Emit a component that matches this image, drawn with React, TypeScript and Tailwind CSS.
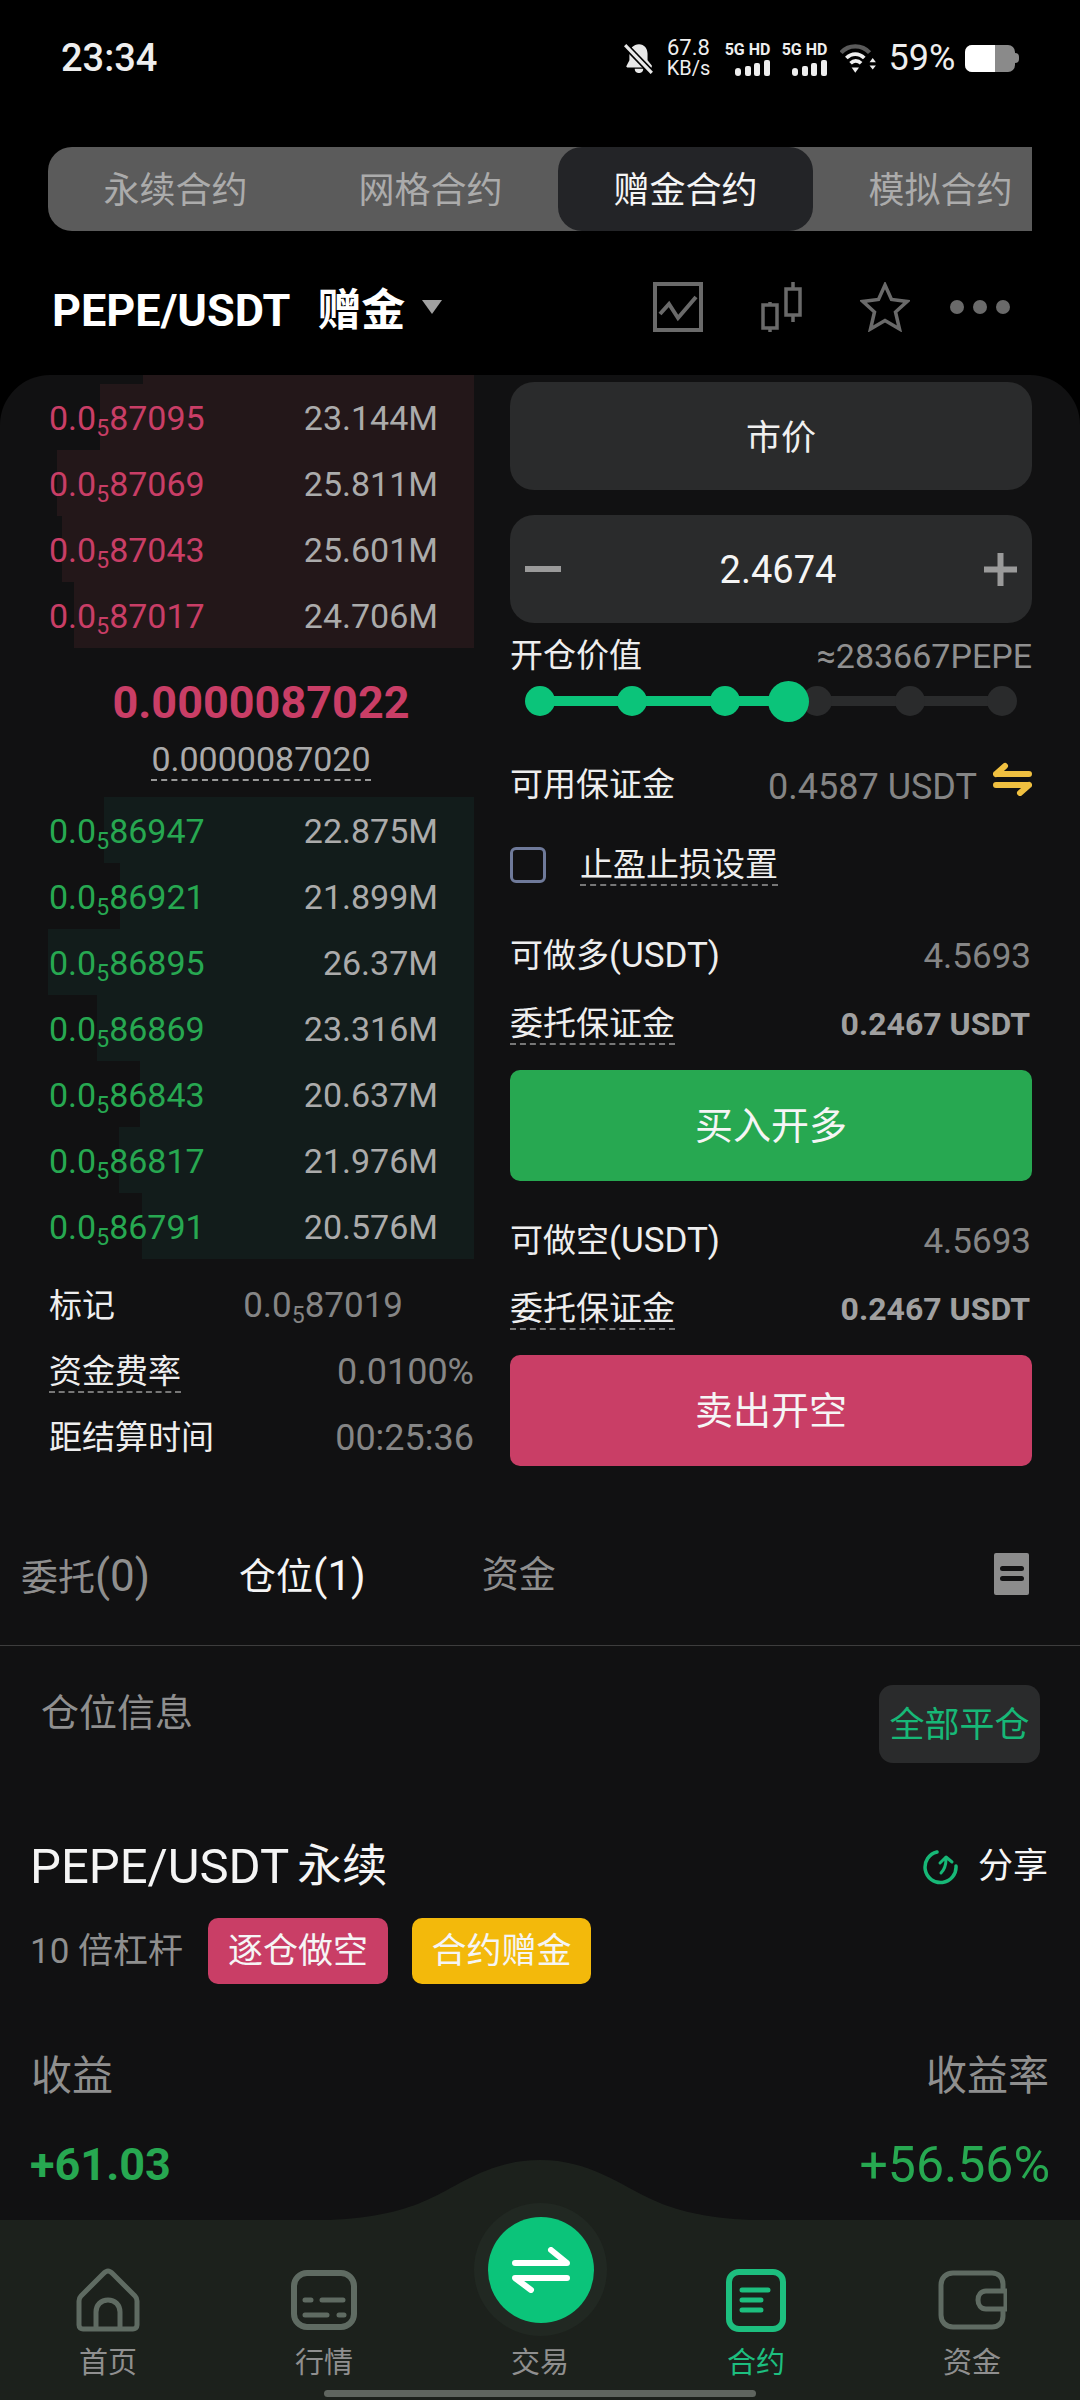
import type { ReactNode } from 'react';

const asks = [
  { price: '87095', qty: '23.144M', left: 100 },
  { price: '87069', qty: '25.811M', left: 57 },
  { price: '87043', qty: '25.601M', left: 62 },
  { price: '87017', qty: '24.706M', left: 74 },
];

const bids = [
  { price: '86947', qty: '22.875M', left: 104 },
  { price: '86921', qty: '21.899M', left: 120 },
  { price: '86895', qty: '26.37M', left: 48 },
  { price: '86869', qty: '23.316M', left: 97 },
  { price: '86843', qty: '20.637M', left: 140 },
  { price: '86817', qty: '21.976M', left: 119 },
  { price: '86791', qty: '20.576M', left: 142 },
];

function Sub5({ digits }: { digits: string }) {
  return (
    <span>
      0.0<span className="text-[23px] leading-[0] align-[-6px]">5</span>
      {digits}
    </span>
  );
}

/* ── Order book row ── */
function BookRow({ price, qty, left, side }: { price: string; qty: string; left: number; side: 'ask' | 'bid' }) {
  return (
    <div className="relative h-[66px] flex items-center justify-between pl-[49px] pr-[36px] pt-[2px] text-[34px] leading-none">
      <div
        className={`absolute top-0 bottom-0 right-0 ${side === 'ask' ? 'bg-[#231719]' : 'bg-[#121c1b]'}`}
        style={{ left }}
      />
      <span className={`relative ${side === 'ask' ? 'text-[#c93e66]' : 'text-[#27a851]'}`}>
        <Sub5 digits={price} />
      </span>
      <span className="relative text-[#ababab]">{qty}</span>
    </div>
  );
}

function Dashed({ children }: { children: ReactNode }) {
  return <span className="inline-block h-[42px] leading-[42px] border-b-2 border-dashed border-[#777]">{children}</span>;
}

function InfoRow({ children }: { children: ReactNode }) {
  return <div className="h-[66px] flex items-center justify-between pl-[49px] text-[33px] text-[#eeeeee]">{children}</div>;
}

function MarginRows({ title }: { title: string }) {
  return (
    <>
      <div className="h-[56px] flex items-center justify-between text-[33px] text-[#eeeeee]">
        <span>
          {title}
          <span className="text-[35px]">(USDT)</span>
        </span>
        <span className="text-[35px] text-[#858585] mr-[1px] pt-[2px]">4.5693</span>
      </div>
      <div className="mt-[12px] h-[56px] flex items-center justify-between text-[33px] text-[#eeeeee]">
        <Dashed>委托保证金</Dashed>
        <span className="text-[32px] font-bold text-[#a0a0a0] mr-[2px]">0.2467 USDT</span>
      </div>
    </>
  );
}

/* ── Status bar icons ── */
function Signal() {
  return (
    <div className="w-[47px] flex flex-col items-end">
      <span className="text-[16px] font-bold leading-[18px] text-[#eeeeee] whitespace-nowrap">5G HD</span>
      <svg width="35" height="16" viewBox="0 0 35 16" className="mt-[1px]">
        <rect x="0" y="8" width="6" height="8" rx="3" fill="#eee" />
        <rect x="10" y="6" width="6" height="10" rx="2" fill="#eee" />
        <rect x="19" y="3" width="6" height="13" rx="2" fill="#eee" />
        <rect x="29" y="0" width="6" height="16" rx="2" fill="#eee" />
      </svg>
    </div>
  );
}

function StatusBar() {
  return (
    <div className="h-[116px] flex items-center pl-[61px] text-[#eeeeee]">
      <span className="text-[38px] font-medium leading-none">23:34</span>
      <svg width="30" height="32" viewBox="0 0 28 30" className="ml-[467px]">
        <path d="M14 2c5 0 8 4 8 9v6l4 5v2H3l-1-1 3-6v-6c0-5 4-9 9-9zM10 25h8c0 3-2 4-4 4s-4-1-4-4z" fill="#e8e8e8" />
        <path d="M1 3l25 26" stroke="#000" strokeWidth="6" />
        <path d="M1 3l25 26" stroke="#e8e8e8" strokeWidth="3" />
      </svg>
      <div className="ml-[12px] w-[44px] flex flex-col items-center">
        <span className="h-[20px] leading-[20px] text-[22px]">67.8</span>
        <span className="h-[20px] leading-[20px] text-[20px]">KB/s</span>
      </div>
      <div className="ml-[13px]"><Signal /></div>
      <div className="ml-[10px]"><Signal /></div>
      <svg width="38" height="32" viewBox="0 0 36 30" className="ml-[13px]">
        <path d="M1 10C8 2 21 2 28 10" stroke="#5a5a5a" strokeWidth="4" fill="none" />
        <path d="M6 15c5-5 12-5 17 0" stroke="#eee" strokeWidth="3.500" fill="none" />
        <path d="M10 20c3-3 7-3 10 0" stroke="#eee" strokeWidth="3.500" fill="none" />
        <path d="M11 24h7l-3.500 5z" fill="#eee" />
        <path d="M28 19l3-4 3 4zM28 22l3 4 3-4z" fill="#eee" />
      </svg>
      <span className="ml-[10px] text-[36px] leading-none">59%</span>
      <div className="ml-[10px] w-[50px] h-[27px] rounded-[7px] overflow-hidden flex bg-[#8a8a8a]">
        <div className="w-[30px] bg-white" />
      </div>
      <div className="w-[4px] h-[10px] rounded-r-full bg-[#8a8a8a]" />
    </div>
  );
}

function TabItem({ label, active }: { label: string; active?: boolean }) {
  return (
    <div
      className={`w-[255px] shrink-0 h-full pt-[3px] flex items-center justify-center text-[36px] ${
        active ? 'bg-[#232427] rounded-[24px] text-[#f5f5f5]' : 'text-[#ababab]'
      }`}
    >
      {label}
    </div>
  );
}

/* ── Bottom nav icons ── */
function HomeIcon() {
  return (
    <svg width="64" height="64" viewBox="0 0 64 64" fill="none" stroke="#5f6b62" strokeWidth="5" strokeLinejoin="round" strokeLinecap="round">
      <path d="M32 3c2 0 3 1 5 3l22 22c2 2 2 3 2 5v24c0 3-2 4-4 4H7c-2 0-4-1-4-4V33c0-2 0-3 2-5L27 6c2-2 3-3 5-3z" />
      <path d="M20 60V44c0-7 5-12 12-12s12 5 12 12v16" />
    </svg>
  );
}

function MarketIcon() {
  return (
    <svg width="66" height="60" viewBox="0 0 66 60" fill="none" stroke="#5f6b62" strokeLinecap="round">
      <rect x="3" y="3" width="60" height="54" rx="13" strokeWidth="6" />
      <path d="M14 30h6M31 30h21M14 45h22M48 45h5" strokeWidth="5" />
    </svg>
  );
}

function ContractIcon() {
  return (
    <svg width="60" height="63" viewBox="0 0 60 63" fill="none" stroke="#1dbf7f" strokeLinecap="round">
      <rect x="3" y="3" width="54" height="57" rx="10" strokeWidth="6" />
      <path d="M16 21h26M16 31h19M16 41h19" strokeWidth="5" />
    </svg>
  );
}

function WalletIcon() {
  return (
    <svg width="69" height="60" viewBox="0 0 69 60" fill="none" stroke="#5f6b62" strokeWidth="5">
      <path d="M65 20V14C65 7 60 3 54 3H15C8 3 3 8 3 15v30c0 7 5 12 12 12h39c6 0 11-4 11-11v-6" />
      <path d="M68 21H48c-5 0-8 4-8 9s3 9 8 9h20z" />
    </svg>
  );
}

function NavItem({ label, icon, active }: { label: string; icon?: ReactNode; active?: boolean }) {
  return (
    <div className="flex flex-col items-center">
      <div className="h-[64px] flex items-center justify-center">{icon}</div>
      <span className={`mt-[9px] h-[45px] leading-[45px] text-[29px] ${active ? 'text-[#1dbf7f]' : 'text-[#8f8f8f]'}`}>{label}</span>
    </div>
  );
}

export default function App() {
  return (
    <div
      className="w-[1080px] h-[2400px] overflow-hidden bg-black flex flex-col"
      style={{ fontFamily: 'Roboto, "Noto Sans CJK SC", sans-serif' }}
    >
      <StatusBar />

      {/* 顶部合约切换 */}
      <div className="mt-[31px] ml-[48px] w-[984px] h-[84px] flex overflow-hidden rounded-l-[24px] bg-[#5b5b5b]">
        <TabItem label="永续合约" />
        <TabItem label="网格合约" />
        <TabItem label="赠金合约" active />
        <TabItem label="模拟合约" />
      </div>

      {/* 标题栏 */}
      <div className="mt-[41px] h-[72px] flex items-center pl-[52px]">
        <span className="pt-[5px] text-[45px] font-bold text-white leading-none">PEPE/USDT</span>
        <span className="ml-[27px] pt-[5px] text-[44px] font-bold text-white leading-none">赠金</span>
        <div className="ml-[17px] mt-[-2px] w-0 h-0 border-x-[10px] border-x-transparent border-t-[14px] border-t-[#a0a0a0]" />
        <svg width="50" height="50" viewBox="0 0 50 50" fill="none" stroke="#6a6a6a" strokeWidth="4" className="ml-[211px] mt-[-3px]">
          <rect x="2" y="2" width="46" height="46" />
          <path d="M7 32l9-10 9 14 18-21" />
        </svg>
        <svg width="41" height="50" viewBox="0 0 41 50" fill="none" stroke="#6a6a6a" strokeWidth="3.500" className="ml-[58px] mt-[-3px]">
          <rect x="2" y="23" width="14" height="23" />
          <path d="M9 20v3M9 46v4" />
          <rect x="25" y="7" width="14" height="26" />
          <path d="M32 0v7M32 33v7" />
        </svg>
        <svg width="50" height="50" viewBox="0 0 50 50" fill="none" stroke="#6a6a6a" strokeWidth="3.500" className="ml-[58px] mt-[-3px]">
          <path d="M25 3l6.500 14.500L47 19.500 35.500 30l4 17L25 38.500 10.500 47l4-17L3 19.500l15.500-2z" />
        </svg>
        <div className="ml-[40px] mt-[-3px] flex gap-[9px]">
          <div className="w-[14px] h-[14px] rounded-full bg-[#6a6a6a]" />
          <div className="w-[14px] h-[14px] rounded-full bg-[#6a6a6a]" />
          <div className="w-[14px] h-[14px] rounded-full bg-[#6a6a6a]" />
        </div>
      </div>

      {/* 主面板 */}
      <div className="mt-[31px] flex-1 rounded-t-[50px] bg-[#111112] flex flex-col">
        <div className="flex">
          {/* 盘口 */}
          <div className="w-[474px] shrink-0">
            <div className="h-[9px] ml-[143px] bg-[#231719]" />
            {asks.map((a) => (
              <BookRow key={a.price} {...a} side="ask" />
            ))}
            <div className="h-[149px] pl-[48px] flex flex-col items-center">
              <span className="mt-[29px] h-[52px] leading-[52px] text-[45px] font-bold text-[#c93e66]">0.0000087022</span>
              <span className="mt-[8px] h-[44px] leading-[44px] text-[34px] text-[#ababab] border-b-2 border-dashed border-[#999]">0.0000087020</span>
            </div>
            {bids.map((b) => (
              <BookRow key={b.price} {...b} side="bid" />
            ))}
            <div className="mt-[14px]">
              <InfoRow>
                <span>标记</span>
                <span className="text-[35px] text-[#858585] mr-[71px]">
                  <Sub5 digits="87019" />
                </span>
              </InfoRow>
              <InfoRow>
                <Dashed>资金费率</Dashed>
                <span className="text-[36px] text-[#858585]">0.0100%</span>
              </InfoRow>
              <InfoRow>
                <span>距结算时间</span>
                <span className="text-[36px] text-[#858585]">00:25:36</span>
              </InfoRow>
            </div>
          </div>

          {/* 下单 */}
          <div className="ml-[36px] w-[522px] pt-[7px]">
            <div className="h-[108px] rounded-[24px] bg-[#2a2b2c] pl-[20px] pt-[6px] flex items-center justify-center text-[35px] text-[#f0f0f0]">
              市价
            </div>
            <div className="mt-[25px] h-[108px] rounded-[24px] bg-[#2a2b2c] flex items-center pl-[15px] pr-[15px]">
              <div className="w-[36px] h-[6px] bg-[#9a9a9a]" />
              <span className="flex-1 text-center text-[38px] text-[#f5f5f5] pl-[11px] pt-[3px]">2.4674</span>
              <svg width="33" height="33" viewBox="0 0 33 33">
                <path d="M0 16.500h33M16.500 0v33" stroke="#9a9a9a" strokeWidth="6" />
              </svg>
            </div>
            <div className="h-[66px] flex items-center justify-between text-[33px] text-[#eeeeee]">
              <span>开仓价值</span>
              <span className="text-[34px] text-[#8f8f8f]">≈283667PEPE</span>
            </div>
            {/* 滑块 */}
            <div className="relative ml-[15px] w-[492px] h-[24px] flex items-center justify-between">
              <div className="absolute left-[15px] right-[15px] h-[10px] bg-[#2a2b2c]" />
              <div className="absolute left-[15px] w-[248px] h-[10px] bg-[#0bc47a]" />
              {[0, 1, 2, 3, 4, 5].map((i) => (
                <div
                  key={i}
                  className={`relative w-[30px] h-[30px] rounded-full shrink-0 ${i < 3 ? 'bg-[#0bc47a]' : 'bg-[#2a2b2c]'}`}
                />
              ))}
              <div className="absolute left-[243px] w-[41px] h-[41px] rounded-full bg-[#0bc47a]" />
            </div>
            <div className="mt-[42px] h-[60px] flex items-center text-[33px] text-[#eeeeee]">
              <span>可用保证金</span>
              <span className="ml-auto pt-[3px] text-[36px] text-[#858585]">0.4587 USDT</span>
              <svg width="39" height="34" viewBox="0 0 39 34" fill="none" stroke="#f0c040" strokeWidth="6" strokeLinecap="round" className="ml-[16px] mb-[12px]">
                <path d="M3 12h33M3 12l9-8M36 23H3M36 23l-9 8" />
              </svg>
            </div>
            <div className="mt-[19px] h-[60px] pt-[1px] flex items-center text-[33px] text-[#eeeeee]">
              <div className="w-[36px] h-[36px] rounded-[6px] border-[3px] border-[#6f7a9a]" />
              <span className="ml-[34px]">
                <Dashed>止盈止损设置</Dashed>
              </span>
            </div>
            <div className="mt-[34px]">
              <MarginRows title="可做多" />
            </div>
            <div className="mt-[18px] h-[111px] rounded-[10px] bg-[#27a851] pt-[2px] flex items-center justify-center text-[38px] text-[#f5f5f5]">
              买入开多
            </div>
            <div className="mt-[32px]">
              <MarginRows title="可做空" />
            </div>
            <div className="mt-[18px] h-[111px] rounded-[10px] bg-[#c93e66] pt-[2px] flex items-center justify-center text-[38px] text-[#f5f5f5]">
              卖出开空
            </div>
          </div>
        </div>

        {/* 委托/仓位 tab */}
        <div className="h-[175px] pt-[35px] pl-[21px] pr-[51px] flex items-center border-b border-[#3d3d3d] text-[37px] text-[#8f8f8f]">
          <span>
            委托<span className="text-[44px]">(0)</span>
          </span>
          <span className="ml-[89px] text-[#f5f5f5]">
            仓位<span className="text-[42px]">(1)</span>
          </span>
          <span className="ml-[116px]">资金</span>
          <div className="ml-auto w-[35px] h-[42px] rounded-[2px] bg-[#8c8c8c] flex flex-col items-center justify-center gap-[5px] mb-[4px]">
            <div className="w-[24px] h-[5px] rounded-full bg-[#111112]" />
            <div className="w-[24px] h-[5px] rounded-full bg-[#111112]" />
          </div>
        </div>

        {/* 仓位信息 */}
        <div className="pt-[39px] pl-[41px] pr-[40px] flex items-start justify-between">
          <span className="h-[56px] leading-[56px] text-[38px] text-[#8f8f8f]">仓位信息</span>
          <div className="w-[161px] h-[78px] rounded-[14px] bg-[#2a2b2c] pt-[4px] flex items-center justify-center text-[35px] text-[#17b877]">
            全部平仓
          </div>
        </div>

        <div className="mt-[68px] h-[70px] pt-[2px] pl-[30px] pr-[32px] flex items-center text-[#f5f5f5]">
          <span className="text-[49px]">PEPE/USDT</span>
          <span className="ml-[8px] text-[45px]">永续</span>
          <svg width="36" height="36" viewBox="0 0 36 36" fill="none" stroke="#17b877" strokeWidth="3.500" strokeLinecap="round" strokeLinejoin="round" className="ml-auto">
            <path d="M14 3A15.500 15.500 0 1 0 33 17" />
            <path d="M18 24C22 20 23 16 23 10M17 14l6-6 6 5" strokeWidth="3" />
          </svg>
          <span className="ml-[19px] text-[35px]">分享</span>
        </div>

        <div className="mt-[17px] h-[66px] pl-[30px] flex items-center text-[35px]">
          <span className="text-[#8f8f8f] pt-[2px]">10 倍杠杆</span>
          <div className="ml-[25px] w-[180px] h-[66px] pt-[3px] rounded-[10px] bg-[#c93e66] text-[#f5f5f5] flex items-center justify-center">逐仓做空</div>
          <div className="ml-[24px] w-[179px] h-[66px] pt-[3px] rounded-[10px] bg-[#f3b90b] text-[#f5f5f5] flex items-center justify-center">合约赠金</div>
        </div>

        <div className="mt-[61px] h-[60px] pt-[3px] px-[31px] flex items-center justify-between text-[41px] text-[#8f8f8f]">
          <span>收益</span>
          <span>收益率</span>
        </div>

        <div className="mt-[29px] h-[60px] pt-[2px] px-[30px] flex items-center justify-between text-[#27a851]">
          <span className="text-[45px] font-bold">+61.03</span>
          <span className="text-[50px]">+56.56%</span>
        </div>

        {/* 底部导航 */}
        <div className="relative mt-auto h-[180px] bg-[#1c211c]">
          <svg width="440" height="61" viewBox="0 0 440 61" className="absolute left-[320px] top-[-60px]">
            <path d="M10 61V60C55 58 85 50 107 40C140 25 170 0 220 0C270 0 300 25 333 40C355 50 385 58 430 60V61Z" fill="#1c211c" />
          </svg>
          <div className="absolute left-[474px] top-[-17px] w-[133px] h-[133px] rounded-full bg-[#212822] flex items-center justify-center">
            <div className="w-[106px] h-[106px] rounded-full bg-[#0bc47a] flex items-center justify-center">
              <svg width="58" height="46" viewBox="0 0 58 46" fill="none" stroke="#fff" strokeWidth="6" strokeLinecap="round" strokeLinejoin="round">
                <path d="M3 16h52L39 3M55 31H3l16 12" />
              </svg>
            </div>
          </div>
          <div className="grid grid-cols-5 pt-[48px]">
            <NavItem label="首页" icon={<HomeIcon />} />
            <NavItem label="行情" icon={<MarketIcon />} />
            <NavItem label="交易" />
            <NavItem label="合约" icon={<ContractIcon />} active />
            <NavItem label="资金" icon={<WalletIcon />} />
          </div>
          <div className="mt-[4px] mx-auto w-[432px] h-[7px] rounded-full bg-[#5f655f]" />
        </div>
      </div>
    </div>
  );
}
